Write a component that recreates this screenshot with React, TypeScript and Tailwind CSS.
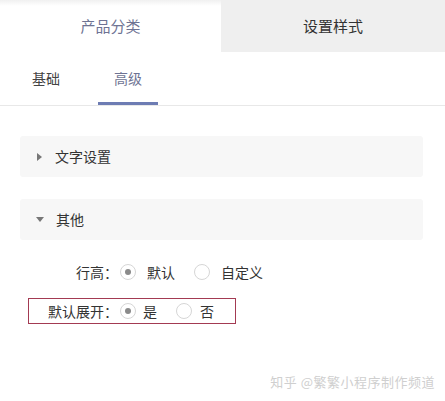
import React from "react";

const font = { fontFamily: '"Noto Sans CJK SC", "Noto Sans", sans-serif' };

function Radio({ checked }: { checked?: boolean }) {
  return (
    <span className="flex h-[16px] w-[16px] shrink-0 items-center justify-center rounded-full border border-[#d6d6d6] bg-white">
      {checked && <span className="h-[6px] w-[6px] rounded-full bg-[#8a8a8a]" />}
    </span>
  );
}

function Panel({ title, open }: { title: string; open?: boolean }) {
  return (
    <div className="flex h-[41px] items-center rounded-[3px] bg-[#f7f7f7] pl-[16px]">
      {open ? (
        <span className="mr-[12px] h-0 w-0 border-x-[4px] border-t-[5px] border-x-transparent border-t-[#777]" />
      ) : (
        <span className="ml-[1px] mr-[13px] h-0 w-0 border-y-[4px] border-l-[5px] border-y-transparent border-l-[#777]" />
      )}
      <span className="text-[14px] text-[#333]">{title}</span>
    </div>
  );
}

export default function App() {
  return (
    <div style={font} className="relative h-[401px] w-[445px] overflow-hidden bg-white">
      {/* top tabs */}
      <div className="flex h-[52px]">
        <div className="flex w-[221px] items-center justify-center bg-[linear-gradient(#f0f0f0,#ffffff_6px)] text-[15px] text-[#6e7393]">
          产品分类
        </div>
        <div className="flex flex-1 items-center justify-center bg-[#efefef] text-[15px] text-[#333]">
          设置样式
        </div>
      </div>

      {/* sub tabs */}
      <div className="flex h-[54px] gap-[22px] border-b border-[#e8e8e8] pl-[16px]">
        <div className="flex w-[60px] items-center justify-center text-[14px] text-[#444]">基础</div>
        <div className="flex w-[60px] items-center justify-center border-b-[3px] border-[#6d7cb3] pt-[3px] text-[14px] text-[#6e7393]">
          高级
        </div>
      </div>

      {/* panels */}
      <div className="flex flex-col gap-[22px] pl-[20px] pr-[22px] pt-[30px]">
        <Panel title="文字设置" />
        <Panel title="其他" open />
      </div>

      {/* form rows */}
      <div className="mt-[19px] flex flex-col gap-[13px] text-[14px] text-[#333]">
        <div className="ml-[28px] flex h-[26px] items-center border border-transparent pl-[19px]">
          <span className="w-[70px] text-right">行高：</span>
          <span className="ml-[2px]"><Radio checked /></span>
          <span className="ml-[11px]">默认</span>
          <span className="ml-[19px]"><Radio /></span>
          <span className="ml-[11px]">自定义</span>
        </div>
        <div className="ml-[28px] flex h-[26px] w-[208px] items-center border border-[#a33a52] pl-[19px]">
          <span className="w-[70px] text-right">默认展开：</span>
          <span className="ml-[2px]"><Radio checked /></span>
          <span className="ml-[7px]">是</span>
          <span className="ml-[19px]"><Radio /></span>
          <span className="ml-[8px]">否</span>
        </div>
      </div>

      {/* watermark */}
      <div className="absolute bottom-[10px] right-[10px] text-[13px] tracking-[0.5px] text-[#cfcfcf]">
        知乎 @繁繁小程序制作频道
      </div>
    </div>
  );
}
